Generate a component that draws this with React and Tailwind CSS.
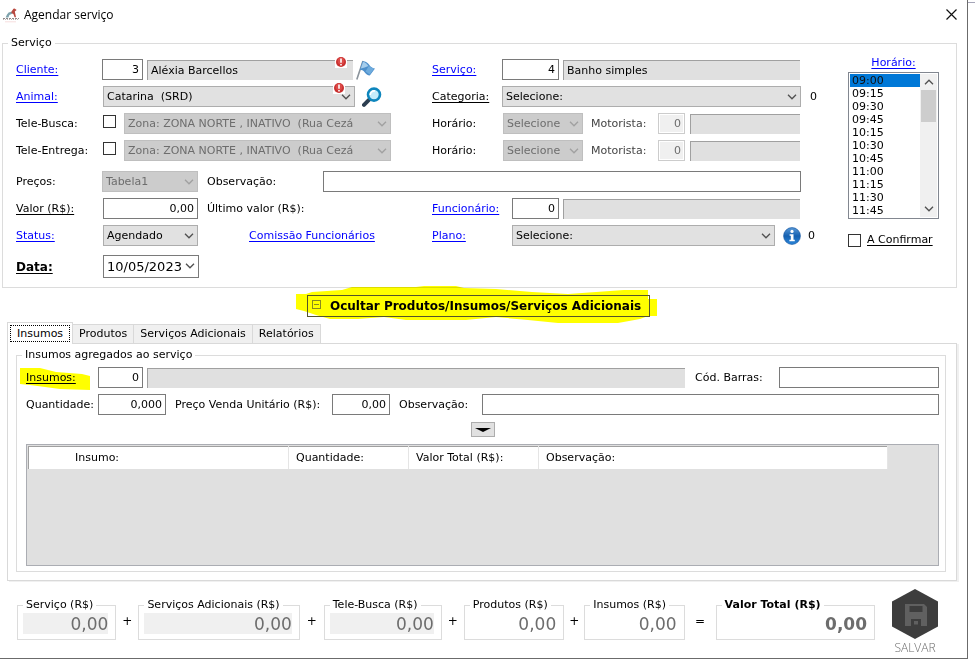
import { useState } from "react";
import clsx from "clsx";

const TIMES = [
    "09:00",
    "09:15",
    "09:30",
    "09:45",
    "10:15",
    "10:30",
    "10:45",
    "11:00",
    "11:15",
    "11:30",
    "11:45",
];

const TABS = ["Insumos", "Produtos", "Serviços Adicionais", "Relatórios"];

const Chevron = ({ className, up }) => (
    <svg
        viewBox="0 0 10 6"
        className={clsx("h-[6px] w-[10px]", up && "rotate-180", className)}
        fill="none"
        stroke="currentColor"
    >
        <path d="M1 0.8 L5 4.8 L9 0.8" strokeWidth="1.3" />
    </svg>
);

const FieldLabel = ({ id, link, underline, className, children }) => (
    <label
        htmlFor={id}
        className={clsx("shrink-0 whitespace-nowrap", className)}
    >
        {link ? (
            <a
                href={`#${id}`}
                className="text-[#0000ff] underline underline-offset-2 [text-decoration-skip-ink:none]"
            >
                {children}
            </a>
        ) : (
            <span
                className={clsx(
                    underline &&
                        "underline underline-offset-2 [text-decoration-skip-ink:none]"
                )}
            >
                {children}
            </span>
        )}
    </label>
);

const TextBox = ({ className, ...props }) => (
    <input
        type="text"
        className={clsx(
            "h-[21px] min-w-0 border border-[#7a7a7a] bg-white px-[3px] outline-none",
            className
        )}
        {...props}
    />
);

const DisabledBox = ({ id, label }) => (
    <input
        id={id}
        type="text"
        disabled
        aria-label={label}
        defaultValue="0"
        className="h-[21px] w-[27px] shrink-0 border border-[#cccccc] bg-[#f0f0f0] px-[3px] text-right text-[#6d6d6d] shadow-[inset_0_0_0_1px_#ffffff]"
    />
);

// Sunken gray box that shows the name found for a code
const ReadOnlyBox = ({ className, ...props }) => (
    <input
        type="text"
        readOnly
        className={clsx(
            "h-5 min-w-0 border-t border-l border-[#a0a0a0] bg-[#e0e0e0] px-[3px] outline-none",
            className
        )}
        {...props}
    />
);

const Combo = ({ id, value, className, disabled, white, label }) => (
    <div className={clsx("relative flex h-[21px] min-w-0", className)}>
        <select
            id={id}
            disabled={disabled}
            aria-label={label}
            className={clsx(
                "h-full w-full appearance-none overflow-hidden border pr-[14px] pl-[3px] text-clip opacity-100 outline-none",
                disabled
                    ? "border-[#bfbfbf] bg-[#cccccc] text-[#6d6d6d]"
                    : white
                      ? "border-[#7a7a7a] bg-white"
                      : "border-[#adadad] bg-[#e1e1e1]"
            )}
        >
            <option>{value}</option>
        </select>
        <Chevron
            className={clsx(
                "pointer-events-none absolute top-2 right-1",
                disabled ? "text-[#a0a0a0]" : "text-[#505050]"
            )}
        />
    </div>
);

const AlertBadge = ({ className }) => (
    <svg viewBox="0 0 12 12" className={clsx("absolute size-3", className)}>
        <rect width="12" height="12" fill="#fff" />
        <circle cx="6" cy="6" r="5" fill="#c9302f" />
        <circle cx="6" cy="5" r="3.4" fill="#dc4a48" />
        <path d="M6 2.5v4.2M6 8v1.6" stroke="#fff" strokeWidth="1.6" />
    </svg>
);

const FlagIcon = () => (
    <svg viewBox="0 0 20 20" className="size-5">
        <path d="M7 1 L0.8 19.5" stroke="#8b939b" strokeWidth="1.6" />
        <path
            d="M6.5 1.2 C9 .8 11.5 2.2 13 4.5 C14.5 7 16.5 8.2 19 8.6 L13.8 15.6 C11.5 15.5 10 14 8.6 12.2 C7.4 10.6 5.6 9.8 3.8 9.8 Z"
            fill="#4d8fcb"
        />
        <path
            d="M7 2 C9 2 11 4 12.4 6 C10 7 7.5 8 4.8 8.6 Z"
            fill="#a5cdec"
        />
        <path d="M12.8 6 L18 8.8 L13.8 14.4 L9.5 11.5 Z" fill="#6eabdd" />
    </svg>
);

const SearchIcon = () => (
    <svg viewBox="0 0 20 20" className="size-5">
        <path
            d="M7.2 12.6 L2 17.8"
            stroke="#2c3e50"
            strokeWidth="4"
            strokeLinecap="round"
        />
        <circle
            cx="12"
            cy="7.6"
            r="6"
            fill="#c4ecfb"
            stroke="#0e86bd"
            strokeWidth="2.6"
        />
        <path
            d="M8.2 8 A4 4 0 0 1 13 4"
            fill="none"
            stroke="#fff"
            strokeWidth="1.6"
        />
    </svg>
);

const InfoIcon = () => (
    <svg viewBox="0 0 18 18" className="size-[18px]">
        <defs>
            <linearGradient id="info-fill" x1="0" y1="0" x2="0" y2="1">
                <stop offset="0" stopColor="#5a9ad8" />
                <stop offset="0.5" stopColor="#1560b0" />
                <stop offset="1" stopColor="#2a86da" />
            </linearGradient>
        </defs>
        <circle
            cx="9"
            cy="9"
            r="8.4"
            fill="url(#info-fill)"
            stroke="#1c5ca6"
            strokeWidth="0.7"
        />
        <circle cx="9" cy="4.4" r="1.6" fill="#fff" />
        <path d="M6.6 7.2h3.9v5.6h1.3v1.5H6.4v-1.5h1.4V8.7H6.6Z" fill="#fff" />
    </svg>
);

const AppIcon = () => (
    <svg viewBox="0 0 16 15" className="h-[15px] w-4">
        <path
            d="M2.6 9.4 L4 6.4 L5.6 4.6 L9 3.4 L10.4 5 L8 6.2 L6.4 7 L5.4 9.4Z"
            fill="#7fa3ad"
        />
        <path
            d="M8.6 3.4 L10.4 .8 L11.6 .4 L13.6 2 L11.8 3.4 L13 9.2 L11.6 9.2 L10.4 6 L8.4 5Z"
            fill="#b8483f"
        />
        <path d="M0 10.5h16" stroke="#8f8888" strokeDasharray="2 1" />
        <path d="M0 11.5h16" stroke="#b9b2b2" strokeDasharray="1 1" />
        <path d="M2 13.8h11" stroke="#f7dede" />
    </svg>
);

const SaveIcon = () => (
    <svg viewBox="0 0 48 52" className="h-[52px] w-12">
        <path d="M24 1 L47 13.5 V38.5 L24 51 L1 38.5 V13.5Z" fill="#3d3d3d" />
        <path d="M14 16h19l3 3v19H14Z" fill="#606060" />
        <path d="M18.5 18h13v6h-13ZM20 31h10v7H20Z" fill="#3d3d3d" />
        <path d="M23 33h4v3.5h-4Z" fill="#606060" />
    </svg>
);

const FormRow = ({ className, left, children }) => (
    <div className={clsx("flex", className)}>
        <div className="flex w-[416px] shrink-0 items-center">{left}</div>
        <div className="flex min-w-0 flex-1 items-center">{children}</div>
    </div>
);

const TeleRow = ({ name, id }) => (
    <FormRow
        left={
            <>
                <FieldLabel id={id} className="w-[87px]">
                    {name}
                </FieldLabel>
                <input
                    id={id}
                    type="checkbox"
                    className="mb-1 size-[13px] appearance-none border border-[#333333] bg-white checked:bg-[#0078d7]"
                />
                <Combo
                    label={`Zona ${name}`}
                    value={"Zona: ZONA NORTE , INATIVO \u00a0(Rua Cezá"}
                    disabled
                    className="ml-2 w-[267px]"
                />
            </>
        }
    >
        <FieldLabel id={`${id}-horario`} className="w-[71px]">
            Horário:
        </FieldLabel>
        <Combo
            id={`${id}-horario`}
            value="Selecione"
            disabled
            className="w-[80px] shrink-0"
        />
        <FieldLabel
            id={`${id}-motorista`}
            className="ml-2 w-[67px] text-[#444444]"
        >
            Motorista:
        </FieldLabel>
        <DisabledBox id={`${id}-motorista`} />
        <ReadOnlyBox
            aria-label="Nome do motorista"
            className="mr-[21px] ml-[5px] flex-1"
        />
    </FormRow>
);

const Total = ({ id, title, gray, bold, className }) => (
    <fieldset
        className={clsx(
            "mt-[9px] h-[43px] min-w-0 border border-[#dcdcdc]",
            className
        )}
    >
        <legend
            className={clsx(
                "ml-[5px] px-[3px] leading-4 whitespace-nowrap",
                bold && "font-bold"
            )}
        >
            <label htmlFor={id}>{title}</label>
        </legend>
        <input
            id={id}
            type="text"
            readOnly
            defaultValue="0,00"
            className={clsx(
                "ml-[5px] block h-[21px] w-[calc(100%-12px)] text-right text-[17px] text-[#6d6d6d] outline-none",
                gray && "bg-[#f0f0f0]",
                bold && "font-bold"
            )}
        />
    </fieldset>
);

const Operator = ({ children, className }) => (
    <span
        className={clsx("mt-[25px] shrink-0 text-center text-xs", className)}
    >
        {children}
    </span>
);

const ServiceForm = () => (
    <fieldset className="flex min-w-0 border border-[#dcdcdc] pr-[17px] pb-[9px] pl-[13px]">
        <legend className="-ml-2 px-[3px] leading-4">Serviço</legend>
        <div className="mt-2 flex min-w-0 flex-1 flex-col gap-1.5">
            <FormRow
                left={
                    <>
                        <FieldLabel id="cliente" link className="w-[86px]">
                            Cliente:
                        </FieldLabel>
                        <TextBox
                            id="cliente"
                            defaultValue="3"
                            className="w-[41px] text-right"
                        />
                        <div className="relative ml-1 flex">
                            <ReadOnlyBox
                                aria-label="Nome do cliente"
                                defaultValue="Aléxia Barcellos"
                                className="w-[206px]"
                            />
                            <AlertBadge className="-top-1 right-1.5" />
                        </div>
                        <button
                            type="button"
                            aria-label="Sinalizar cliente"
                            className="-my-1 ml-[3px]"
                        >
                            <FlagIcon />
                        </button>
                    </>
                }
            >
                <FieldLabel id="servico" link className="w-[70px]">
                    Serviço:
                </FieldLabel>
                <TextBox
                    id="servico"
                    defaultValue="4"
                    className="w-[57px] shrink-0 text-right"
                />
                <ReadOnlyBox
                    aria-label="Nome do serviço"
                    defaultValue="Banho simples"
                    className="mr-[21px] ml-1 flex-1"
                />
            </FormRow>
            <FormRow
                left={
                    <>
                        <FieldLabel id="animal" link className="w-[87px]">
                            Animal:
                        </FieldLabel>
                        <div className="relative">
                            <Combo
                                id="animal"
                                value={"Catarina \u00a0(SRD)"}
                                className="w-[252px]"
                            />
                            <AlertBadge className="-top-1 right-2.5" />
                        </div>
                        <button
                            type="button"
                            aria-label="Buscar animal"
                            className="-my-1 ml-[7px]"
                        >
                            <SearchIcon />
                        </button>
                    </>
                }
            >
                <FieldLabel id="categoria" underline className="w-[70px]">
                    Categoria:
                </FieldLabel>
                <Combo
                    id="categoria"
                    value="Selecione:"
                    className="flex-1"
                />
                <span className="w-5 pl-[9px]">0</span>
            </FormRow>
            <TeleRow name="Tele-Busca:" id="tele-busca" />
            <TeleRow name="Tele-Entrega:" id="tele-entrega" />
            <div className="mt-1 flex items-center pr-5">
                <FieldLabel id="precos" className="w-[86px]">
                    Preços:
                </FieldLabel>
                <Combo
                    id="precos"
                    value="Tabela1"
                    disabled
                    className="w-[96px]"
                />
                <FieldLabel id="observacao" className="ml-[9px] w-[116px]">
                    Observação:
                </FieldLabel>
                <TextBox id="observacao" className="flex-1" />
            </div>
            <FormRow
                left={
                    <>
                        <FieldLabel id="valor" underline className="w-[87px]">
                            Valor (R$):
                        </FieldLabel>
                        <TextBox
                            id="valor"
                            defaultValue="0,00"
                            className="w-[95px] text-right"
                        />
                        <span className="ml-[9px]">Último valor (R$):</span>
                    </>
                }
            >
                <FieldLabel id="funcionario" link className="w-[80px]">
                    Funcionário:
                </FieldLabel>
                <TextBox
                    id="funcionario"
                    defaultValue="0"
                    className="w-[47px] shrink-0 text-right"
                />
                <ReadOnlyBox
                    aria-label="Nome do funcionário"
                    className="mr-[21px] ml-1 flex-1"
                />
            </FormRow>
            <FormRow
                left={
                    <>
                        <FieldLabel id="status" link className="w-[87px]">
                            Status:
                        </FieldLabel>
                        <Combo
                            id="status"
                            value="Agendado"
                            className="w-[95px]"
                        />
                        <a
                            href="#comissao"
                            className="ml-[51px] text-[#0000ff] underline underline-offset-2"
                        >
                            Comissão Funcionários
                        </a>
                    </>
                }
            >
                <FieldLabel id="plano" link className="w-[80px]">
                    Plano:
                </FieldLabel>
                <Combo id="plano" value="Selecione:" className="flex-1" />
                <button
                    type="button"
                    aria-label="Informações do plano"
                    className="ml-2"
                >
                    <InfoIcon />
                </button>
                <span className="w-5 pl-[7px]">0</span>
            </FormRow>
            <div className="mt-[3px] flex items-center">
                <FieldLabel
                    id="data"
                    underline
                    className="w-[87px] text-xs font-bold"
                >
                    Data:
                </FieldLabel>
                <Combo
                    id="data"
                    value="10/05/2023"
                    white
                    className="h-[23px] w-[96px] text-[13px]"
                />
            </div>
        </div>
        <div className="mt-[3px] ml-[27px] flex w-[91px] shrink-0 flex-col">
            <FieldLabel id="horario" link className="text-center leading-[18px]">
                Horário:
            </FieldLabel>
            <div className="flex h-[147px] border border-[#828790] p-px">
                <select
                    id="horario"
                    size={11}
                    defaultValue="09:00"
                    className="h-[143px] min-w-0 flex-1 overflow-hidden outline-none [scrollbar-width:none]"
                >
                    {TIMES.map((time) => (
                        <option
                            key={time}
                            className="block h-[13px] min-h-0 px-[2px] py-0 leading-[13px] checked:bg-[linear-gradient(#0078d7,#0078d7)]"
                        >
                            {time}
                        </option>
                    ))}
                </select>
                <div className="flex w-[17px] flex-col items-center bg-[#f0f0f0] text-[#505050]">
                    <Chevron up className="my-[5px]" />
                    <div className="h-8 w-[15px] bg-[#cdcdcd]" />
                    <Chevron className="mt-auto mb-[5px]" />
                </div>
            </div>
            <div className="mt-3.5 flex items-center gap-1.5">
                <input
                    id="confirmar"
                    type="checkbox"
                    className="size-[13px] shrink-0 appearance-none border border-[#333333] bg-white checked:bg-[#0078d7]"
                />
                <FieldLabel id="confirmar" underline>
                    A Confirmar
                </FieldLabel>
            </div>
        </div>
    </fieldset>
);

const ToggleButton = () => (
    <div className="relative mt-[7px] ml-[305px] w-fit">
        <svg
            viewBox="0 0 361 40"
            className="absolute -top-2.5 -left-[11px] h-10 w-[361px] mix-blend-multiply"
        >
            <path
                d="M0 9 H10 L16 7 L46 5 L56 2 L120 2 L128 1 L160 1 L168 3 L200 4 L236 7 L272 9 L300 7 L328 5 L352 5 V14 H361 V31 H352 L344 34 L322 38 H262 L232 35 L200 32 L170 35 H110 L88 32 L62 34 L34 34 L20 30 L8 26 L0 24Z"
                fill="#ffff00"
            />
        </svg>
        <button
            type="button"
            className="relative flex h-[22px] w-[343px] items-center border border-[#55552a] pl-1 text-xs font-bold whitespace-nowrap"
        >
            <span className="mr-[9px] mb-1 flex size-[9px] items-center justify-center border border-[#8a8a20]">
                <span className="h-px w-[5px] bg-[#8a8a20]" />
            </span>
            Ocultar Produtos/Insumos/Serviços Adicionais
        </button>
    </div>
);

const SuppliesPanel = () => (
    <fieldset className="mr-2.5 mb-2 ml-2 flex min-w-0 flex-col border border-[#dcdcdc] px-[6px] pb-[5px] pl-[9px]">
        <legend className="-ml-1 px-[3px] leading-4">
            Insumos agregados ao serviço
        </legend>
        <div className="mt-1 flex items-center">
            <div className="relative w-[72px]">
                <svg
                    viewBox="0 0 70 24"
                    className="absolute -top-1 -left-1.5 h-6 w-[70px]"
                >
                    <path
                        d="M0 1 L20 1 L36 5 L62 7 L70 9 V23 L40 22 L10 18 L0 17Z"
                        fill="#ffff00"
                    />
                </svg>
                <FieldLabel id="insumo" underline className="relative">
                    Insumos:
                </FieldLabel>
            </div>
            <TextBox
                id="insumo"
                defaultValue="0"
                className="w-[45px] text-right"
            />
            <ReadOnlyBox
                aria-label="Nome do insumo"
                className="ml-1 flex-1"
            />
            <FieldLabel id="barras" className="ml-2.5 w-[84px]">
                Cód. Barras:
            </FieldLabel>
            <TextBox id="barras" className="w-[160px]" />
        </div>
        <div className="mt-1.5 flex items-center">
            <FieldLabel id="quantidade" className="w-[72px]">
                Quantidade:
            </FieldLabel>
            <TextBox
                id="quantidade"
                defaultValue="0,000"
                className="w-[68px] text-right"
            />
            <FieldLabel id="preco" className="ml-[9px] w-[157px]">
                Preço Venda Unitário (R$):
            </FieldLabel>
            <TextBox
                id="preco"
                defaultValue="0,00"
                className="w-[58px] text-right"
            />
            <FieldLabel id="insumo-obs" className="ml-[9px] w-[83px]">
                Observação:
            </FieldLabel>
            <TextBox id="insumo-obs" className="flex-1" />
        </div>
        <button
            type="button"
            aria-label="Adicionar insumo"
            className="my-[7px] flex h-[15px] w-6 items-center justify-center self-center border border-[#adadad] bg-[#e1e1e1]"
        >
            <svg viewBox="0 0 16 4" className="h-1 w-4">
                <path d="M0 0h16L8 4Z" />
            </svg>
        </button>
        <div className="h-[122px] border border-[#abadb3] bg-[#e0e0e0] p-px">
            <table className="w-[860px] table-fixed border-t border-l border-[#a0a0a0] bg-white text-left">
                <thead>
                    <tr className="h-[22px] *:border-r *:border-[#e5e5e5] *:p-0 *:pl-[7px] *:font-normal">
                        <th className="w-[260px]">
                            <span className="pl-[39px]">Insumo:</span>
                        </th>
                        <th className="w-[120px]">Quantidade:</th>
                        <th className="w-[130px]">Valor Total (R$):</th>
                        <th>Observação:</th>
                    </tr>
                </thead>
            </table>
        </div>
    </fieldset>
);

const App = () => {
    const [tab, setTab] = useState("Insumos");

    return (
        <div className="flex items-start bg-white font-['DejaVu_Sans',sans-serif] text-[11px] leading-[14px] text-black">
            <main className="min-w-0 flex-1 border-r border-b border-[#6b6b6b]">
                <header className="flex h-[35px] items-start justify-between pt-[7px] pr-2.5 pl-[3px]">
                    <div className="flex items-center gap-[5px]">
                        <AppIcon />
                        <h1 className="font-['Open_Sans',sans-serif] text-xs leading-4">
                            Agendar serviço
                        </h1>
                    </div>
                    <button type="button" aria-label="Fechar" className="mt-0.5">
                        <svg
                            viewBox="0 0 11 11"
                            className="size-[11px]"
                            stroke="#111111"
                            strokeWidth="1.2"
                        >
                            <path d="M0.5 0.5 L10.5 10.5 M10.5 0.5 L0.5 10.5" />
                        </svg>
                    </button>
                </header>
                <div className="pr-2.5 pl-0.5">
                    <ServiceForm />
                    <ToggleButton />
                    <div className="mt-[5px] ml-[5px]">
                        <div role="tablist" className="flex items-end">
                            {TABS.map((name) => (
                                <button
                                    key={name}
                                    type="button"
                                    role="tab"
                                    aria-selected={name === tab}
                                    onClick={() => setTab(name)}
                                    className={clsx(
                                        "border-[#d9d9d9] whitespace-nowrap",
                                        name === tab
                                            ? "relative -mb-px h-[22px] border border-b-0 bg-white p-0.5"
                                            : "h-[19px] border-t border-r bg-[#f0f0f0] px-1.5"
                                    )}
                                >
                                    <span
                                        className={clsx(
                                            name === tab &&
                                                "flex h-[17px] items-center border border-dotted border-black px-1.5"
                                        )}
                                    >
                                        {name}
                                    </span>
                                </button>
                            ))}
                        </div>
                        <div
                            role="tabpanel"
                            className="border border-[#d9d9d9] pt-[3px] shadow-[2px_1px_0_#f0f0f0]"
                        >
                            <SuppliesPanel />
                        </div>
                    </div>
                </div>
                <footer className="flex items-start pt-[7px] pr-[28px] pb-0.5 pl-[17px]">
                    <Total
                        id="t-servico"
                        title="Serviço (R$)"
                        gray
                        className="flex-[99]"
                    />
                    <Operator className="w-[22px]">+</Operator>
                    <Total
                        id="t-adicionais"
                        title="Serviços Adicionais (R$)"
                        gray
                        className="flex-[162]"
                    />
                    <Operator className="w-6">+</Operator>
                    <Total
                        id="t-tele"
                        title="Tele-Busca (R$)"
                        gray
                        className="flex-[118]"
                    />
                    <Operator className="w-[22px]">+</Operator>
                    <Total
                        id="t-produtos"
                        title="Produtos (R$)"
                        className="flex-[100]"
                    />
                    <Operator className="w-5">+</Operator>
                    <Total
                        id="t-insumos"
                        title="Insumos (R$)"
                        className="flex-[100]"
                    />
                    <Operator className="w-[31px]">=</Operator>
                    <Total
                        id="t-total"
                        title="Valor Total (R$)"
                        bold
                        className="flex-[160]"
                    />
                    <button
                        type="button"
                        className="ml-4 flex w-12 shrink-0 flex-col items-center font-['Open_Sans',sans-serif] text-xs leading-4 font-light text-[#6d6d6d]"
                    >
                        <SaveIcon />
                        SALVAR
                    </button>
                </footer>
            </main>
            <div className="mt-0.5 h-px w-[7px] bg-[#a5a5b8]" />
        </div>
    );
};

export default App;
